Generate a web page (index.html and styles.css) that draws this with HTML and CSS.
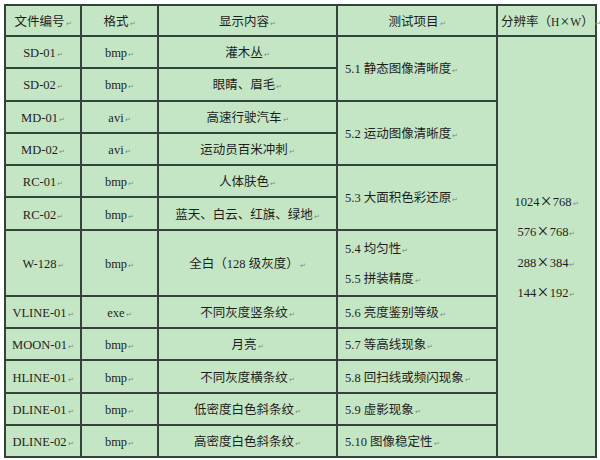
FILE: index.html
```html
<!DOCTYPE html>
<html lang="zh-CN">
<head>
<meta charset="utf-8">
<title>测试图像表</title>
<link rel="stylesheet" href="styles.css">
</head>
<body>
<table class="spec">
  <colgroup>
    <col class="c1"><col class="c2"><col class="c3"><col class="c4"><col class="c5">
  </colgroup>
  <thead>
    <tr class="head">
      <th>文件编号<span class="pm">↵</span></th>
      <th>格式<span class="pm">↵</span></th>
      <th>显示内容<span class="pm">↵</span></th>
      <th>测试项目<span class="pm">↵</span></th>
      <th class="reshead">分辨率（<span class="hw">H</span><span class="x xs">×</span><span class="hw">W</span>）<span class="pm">↵</span></th>
    </tr>
  </thead>
  <tbody>
    <tr>
      <td>SD-01<span class="pm">↵</span></td>
      <td>bmp<span class="pm">↵</span></td>
      <td>灌木丛<span class="pm">↵</span></td>
      <td class="item" rowspan="2">5.1 静态图像清晰度<span class="pm">↵</span></td>
      <td class="res" rowspan="13">
        <div class="reslist">
          <div>1024<span class="x">×</span>768<span class="pm">↵</span></div>
          <div>576<span class="x">×</span>768<span class="pm">↵</span></div>
          <div>288<span class="x">×</span>384<span class="pm">↵</span></div>
          <div>144<span class="x">×</span>192<span class="pm">↵</span></div>
        </div>
      </td>
    </tr>
    <tr>
      <td>SD-02<span class="pm">↵</span></td>
      <td>bmp<span class="pm">↵</span></td>
      <td>眼睛、眉毛<span class="pm">↵</span></td>
    </tr>
    <tr>
      <td>MD-01<span class="pm">↵</span></td>
      <td>avi<span class="pm">↵</span></td>
      <td>高速行驶汽车<span class="pm">↵</span></td>
      <td class="item" rowspan="2">5.2 运动图像清晰度<span class="pm">↵</span></td>
    </tr>
    <tr>
      <td>MD-02<span class="pm">↵</span></td>
      <td>avi<span class="pm">↵</span></td>
      <td>运动员百米冲刺<span class="pm">↵</span></td>
    </tr>
    <tr>
      <td>RC-01<span class="pm">↵</span></td>
      <td>bmp<span class="pm">↵</span></td>
      <td>人体肤色<span class="pm">↵</span></td>
      <td class="item" rowspan="2">5.3 大面积色彩还原<span class="pm">↵</span></td>
    </tr>
    <tr>
      <td>RC-02<span class="pm">↵</span></td>
      <td>bmp<span class="pm">↵</span></td>
      <td>蓝天、白云、红旗、绿地<span class="pm">↵</span></td>
    </tr>
    <tr class="tall">
      <td>W-128<span class="pm">↵</span></td>
      <td>bmp<span class="pm">↵</span></td>
      <td>全白（128 级灰度）<span class="pm">↵</span></td>
      <td class="item">
        <div class="line">5.4 均匀性<span class="pm">↵</span></div>
        <div class="line">5.5 拼装精度<span class="pm">↵</span></div>
      </td>
    </tr>
    <tr>
      <td>VLINE-01<span class="pm">↵</span></td>
      <td>exe<span class="pm">↵</span></td>
      <td>不同灰度竖条纹<span class="pm">↵</span></td>
      <td class="item">5.6 亮度鉴别等级<span class="pm">↵</span></td>
    </tr>
    <tr>
      <td>MOON-01<span class="pm">↵</span></td>
      <td>bmp<span class="pm">↵</span></td>
      <td>月亮<span class="pm">↵</span></td>
      <td class="item">5.7 等高线现象<span class="pm">↵</span></td>
    </tr>
    <tr>
      <td>HLINE-01<span class="pm">↵</span></td>
      <td>bmp<span class="pm">↵</span></td>
      <td>不同灰度横条纹<span class="pm">↵</span></td>
      <td class="item">5.8 回扫线或频闪现象<span class="pm">↵</span></td>
    </tr>
    <tr>
      <td>DLINE-01<span class="pm">↵</span></td>
      <td>bmp<span class="pm">↵</span></td>
      <td>低密度白色斜条纹<span class="pm">↵</span></td>
      <td class="item">5.9 虚影现象<span class="pm">↵</span></td>
    </tr>
    <tr>
      <td>DLINE-02<span class="pm">↵</span></td>
      <td>bmp<span class="pm">↵</span></td>
      <td>高密度白色斜条纹<span class="pm">↵</span></td>
      <td class="item">5.10 图像稳定性<span class="pm">↵</span></td>
    </tr>
  </tbody>
</table>
</body>
</html>
```

FILE: styles.css
```css
html, body {
  margin: 0;
  padding: 0;
  background: #ffffff;
}
body {
  padding: 4px 0 0 4px;
  font-family: "Liberation Serif", "Noto Sans CJK SC", serif;
  font-size: 12.5px;
  color: #1e1e1e;
}
.spec {
  border-collapse: collapse;
  table-layout: fixed;
  width: 591px;
  background: #c5e6c4;
  border: 2px solid #2e3b31;
}
.c1 { width: 76px; }
.c2 { width: 77px; }
.c3 { width: 179px; }
.c4 { width: 160px; }
.c5 { width: 99px; }
.spec th,
.spec td {
  border: 2px solid #35443a;
  padding: 4px 0 0 0;
  text-align: center;
  vertical-align: middle;
  font-weight: normal;
  white-space: nowrap;
  line-height: 16px;
}
.head { height: 31px; }
.spec tbody tr { height: 32.3px; }
.spec tbody tr.tall { height: 64.6px; }
.spec td.item {
  text-align: left;
  padding-left: 7px;
}
.line {
  line-height: 28px;
}
.reslist div {
  line-height: 28.5px;
}
.spec th.reshead {
  padding-left: 3px;
}
.hw {
  font-size: 11.5px;
}
.x {
  font-size: 20px;
  margin: 0 1px;
  vertical-align: -2px;
  line-height: 1;
}
.x.xs {
  font-size: 16px;
  margin: 0 1px;
  vertical-align: -1px;
}
.pm {
  font-size: 7px;
  color: #7c8c7c;
  margin-left: 1px;
  vertical-align: baseline;
}
```
